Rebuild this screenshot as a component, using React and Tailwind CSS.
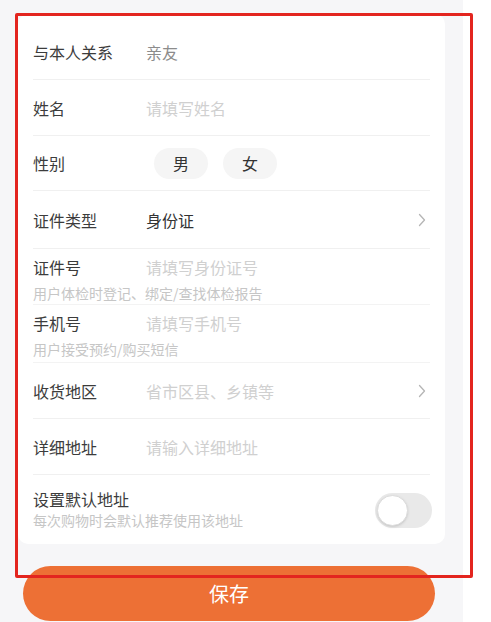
import { useState } from "react";

const Chevron = () => (
  <svg width="8" height="14" viewBox="0 0 8 14" fill="none" className="mr-[4px]">
    <path d="M1.5 1.5L6.5 7L1.5 12.5" stroke="#b5b5b5" strokeWidth="1.3" strokeLinecap="round" strokeLinejoin="round" />
  </svg>
);

const Row = ({ label, children, arrow, h = "h-[56px]" }) => (
  <div className={`flex items-center ${h} border-b border-[#f0f0f0]`}>
    <div className="w-[113px] shrink-0 text-[16px] text-[#3c3c3c]">{label}</div>
    <div className="flex-1 flex items-center">{children}</div>
    {arrow && <Chevron />}
  </div>
);

const HintRow = ({ label, placeholder, hint, h = "h-[56px]" }) => (
  <div className={`flex flex-col ${h} pt-[7px] border-b border-[#f3f3f3]`}>
    <div className="flex items-center h-[22px]">
      <div className="w-[113px] shrink-0 text-[16px] text-[#3c3c3c]">{label}</div>
      <div className="text-[16px] text-[#d0d0d0]">{placeholder}</div>
    </div>
    <div className="mt-[5px] text-[14px] leading-[20px] text-[#c6c6c6]">{hint}</div>
  </div>
);

export default function App() {
  const [sex, setSex] = useState(null);
  const [isDefault, setIsDefault] = useState(false);

  return (
    <div
      className="relative w-[491px] h-[622px] overflow-hidden bg-white flex"
      style={{ fontFamily: '"Noto Sans CJK SC", "Noto Sans", sans-serif' }}
    >
      <div className="w-[463px] bg-[#f6f6f8] pt-[14px] flex flex-col">
        <div className="ml-[18px] w-[427px] bg-white rounded-[10px] px-[15px] pt-[10px]">
          <Row label="与本人关系">
            <span className="text-[16px] text-[#8c8c8c]">亲友</span>
          </Row>
          <Row label="姓名">
            <span className="text-[16px] text-[#d0d0d0]">请填写姓名</span>
          </Row>
          <Row label="性别" h="h-[55px]">
            <div className="flex gap-[15px] ml-[8px]">
              {["男", "女"].map((s) => (
                <button
                  key={s}
                  onClick={() => setSex(s)}
                  className={`w-[54px] h-[31px] rounded-full text-[16px] flex items-center justify-center ${
                    sex === s ? "bg-[#fdeee6] text-[#ed7035]" : "bg-[#f5f5f5] text-[#333]"
                  }`}
                >
                  {s}
                </button>
              ))}
            </div>
          </Row>
          <Row label="证件类型" arrow h="h-[58px]">
            <span className="text-[16px] text-[#333]">身份证</span>
          </Row>
          <HintRow label="证件号" placeholder="请填写身份证号" hint="用户体检时登记、绑定/查找体检报告" />
          <HintRow label="手机号" placeholder="请填写手机号" hint="用户接受预约/购买短信" h="h-[58px]" />
          <Row label="收货地区" arrow>
            <span className="text-[16px] text-[#d0d0d0]">省市区县、乡镇等</span>
          </Row>
          <Row label="详细地址">
            <span className="text-[16px] text-[#d0d0d0]">请输入详细地址</span>
          </Row>
          <div className="flex items-start h-[69px] pt-[13px]">
            <div className="flex-1 flex flex-col">
              <div className="text-[16px] leading-[22px] text-[#3c3c3c]">设置默认地址</div>
              <div className="mt-[1px] text-[14px] leading-[18px] text-[#c6c6c6]">每次购物时会默认推荐使用该地址</div>
            </div>
            <button
              onClick={() => setIsDefault((v) => !v)}
              className={`mt-[5px] -mr-[2px] w-[57px] h-[35px] rounded-full p-[2px] flex ${
                isDefault ? "bg-[#ed7035] justify-end" : "bg-[#e9e9e9] justify-start"
              }`}
            >
              <span className="w-[31px] h-[31px] rounded-full bg-white border border-[#dcdcdc] shadow-sm" />
            </button>
          </div>
        </div>
        <button className="mt-[22px] ml-[23px] w-[412px] h-[55px] shrink-0 rounded-full bg-[#ed7035] text-white text-[20px] flex items-center justify-center">
          保存
        </button>
      </div>
      <div className="absolute left-[15px] top-[13px] w-[458px] h-[565px] border-[3px] border-[#e3251f] rounded-[2px] pointer-events-none" />
    </div>
  );
}
